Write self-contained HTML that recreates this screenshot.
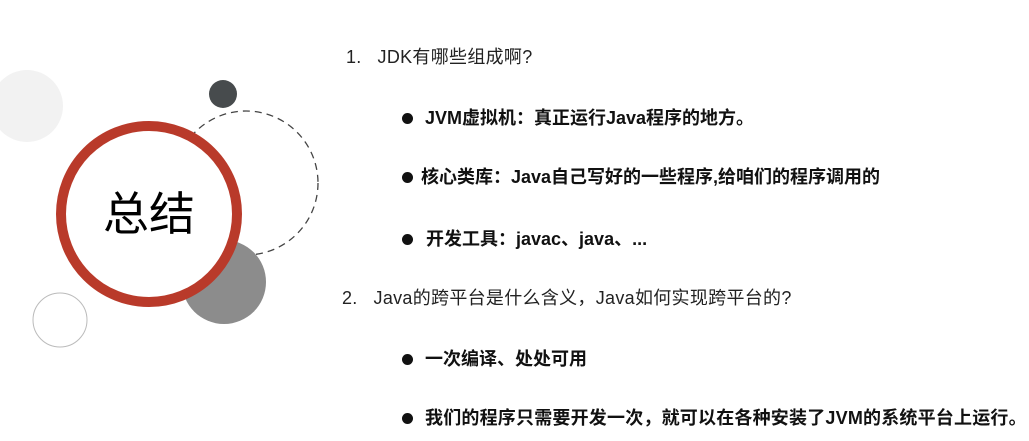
<!DOCTYPE html>
<html><head><meta charset="utf-8"><style>
body{margin:0;width:1029px;height:441px;background:#fff;position:relative;overflow:hidden;font-family:"Liberation Sans","Noto Sans CJK SC",sans-serif;color:#111}
.t{position:absolute;white-space:nowrap;line-height:1}
.q{font-size:18px;color:#222;letter-spacing:0.3px}
.b{font-size:18px;font-weight:bold;color:#111}
.dot{position:absolute;width:11px;height:11px;border-radius:50%;background:#111}
</style></head><body>
<svg width="330" height="441" style="position:absolute;left:0;top:0">
<circle cx="27" cy="106" r="36" fill="#f2f2f2"/>
<circle cx="223" cy="94" r="14" fill="#474b4d"/>
<circle cx="246" cy="183" r="72" fill="none" stroke="#444" stroke-width="1.3" stroke-dasharray="7 5"/>
<circle cx="224" cy="282" r="42" fill="#8c8c8c"/>
<circle cx="60" cy="320" r="27" fill="none" stroke="#bbb" stroke-width="1"/>
<circle cx="149" cy="214" r="88" fill="#fff" stroke="#b93a2a" stroke-width="10"/>
<text x="149" y="230" text-anchor="middle" font-size="46" font-family="Noto Sans CJK SC, sans-serif" fill="#000">总结</text>
</svg>
<div class="t q" style="left:346px;top:48px">1.&nbsp;&nbsp; JDK有哪些组成啊?</div>
<div class="dot" style="left:402px;top:113px"></div>
<div class="t b" style="left:425px;top:109px">JVM虚拟机：真正运行Java程序的地方。</div>
<div class="dot" style="left:402px;top:172px"></div>
<div class="t b" style="left:421px;top:168px">核心类库：Java自己写好的一些程序,给咱们的程序调用的</div>
<div class="dot" style="left:402px;top:234px"></div>
<div class="t b" style="left:426px;top:230px">开发工具：javac、java、...</div>
<div class="t q" style="left:342px;top:289px">2.&nbsp;&nbsp; Java的跨平台是什么含义，Java如何实现跨平台的?</div>
<div class="dot" style="left:402px;top:354px"></div>
<div class="t b" style="left:425px;top:350px">一次编译、处处可用</div>
<div class="dot" style="left:402px;top:413px"></div>
<div class="t b" style="left:425px;top:409px;letter-spacing:0.2px">我们的程序只需要开发一次，就可以在各种安装了JVM的系统平台上运行。</div>
</body></html>
